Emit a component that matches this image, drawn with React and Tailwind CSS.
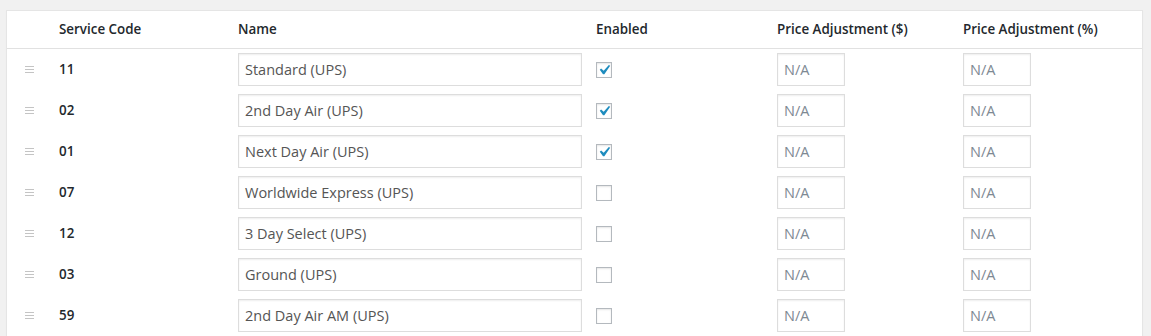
import React from 'react';

const services = [
  { code: '11', name: 'Standard (UPS)', enabled: true },
  { code: '02', name: '2nd Day Air (UPS)', enabled: true },
  { code: '01', name: 'Next Day Air (UPS)', enabled: true },
  { code: '07', name: 'Worldwide Express (UPS)', enabled: false },
  { code: '12', name: '3 Day Select (UPS)', enabled: false },
  { code: '03', name: 'Ground (UPS)', enabled: false },
  { code: '59', name: '2nd Day Air AM (UPS)', enabled: false },
];

const cols = 'grid grid-cols-[52px_179px_358px_181px_186px_1fr]';

const DragHandle = () => (
  <div className="flex flex-col gap-[2px] w-[9px] ml-[18px]">
    <span className="block h-px bg-[#c4c4c4]" />
    <span className="block h-px bg-[#c4c4c4]" />
    <span className="block h-px bg-[#c4c4c4]" />
  </div>
);

const Checkbox = ({ checked }) => (
  <span className="flex items-center justify-center w-4 h-4 border border-[#b4b9be] bg-white shadow-[inset_0_1px_2px_rgba(0,0,0,0.1)] overflow-visible">
    {checked && (
      <svg width="20" height="20" viewBox="0 0 20 20" className="shrink-0 -m-[3px]">
        <path d="M14.83 4.89l1.34.94-5.81 8.38H9.02L5.78 9.67l1.34-1.25 2.57 2.4z" fill="#1e8cbe" />
      </svg>
    )}
  </span>
);

const TextBox = ({ value, className }) => (
  <div className={`h-[33px] border border-[#ddd] bg-white shadow-[inset_0_1px_2px_rgba(0,0,0,0.07)] px-[6px] flex items-center text-[14.5px] ${className}`}>
    {value}
  </div>
);

const App = () => {
  return (
    <div className="bg-[#f1f1f1] pt-[10px] pl-[6px] pr-[8px] font-['Open_Sans','Noto_Sans',sans-serif] overflow-hidden h-[336px]">
      <div className="bg-white border border-[#e5e5e5] shadow-[0_1px_1px_rgba(0,0,0,0.04)]">
        <div className={`${cols} h-[38px] items-center border-b border-[#e1e1e1] text-[13.4px] font-semibold text-[#23282d]`}>
          <div />
          <div>Service Code</div>
          <div>Name</div>
          <div>Enabled</div>
          <div>Price Adjustment ($)</div>
          <div>Price Adjustment (%)</div>
        </div>
        {services.map((s) => (
          <div key={s.code} className={`${cols} h-[41px] items-center text-[13.4px] text-[#23282d]`}>
            <DragHandle />
            <div className="font-semibold">{s.code}</div>
            <TextBox value={s.name} className="w-[344px] text-[#555]" />
            <div className="flex"><Checkbox checked={s.enabled} /></div>
            <TextBox value="N/A" className="w-[68px] text-[#7e8993]" />
            <TextBox value="N/A" className="w-[68px] text-[#7e8993]" />
          </div>
        ))}
      </div>
    </div>
  );
};

export default App;
